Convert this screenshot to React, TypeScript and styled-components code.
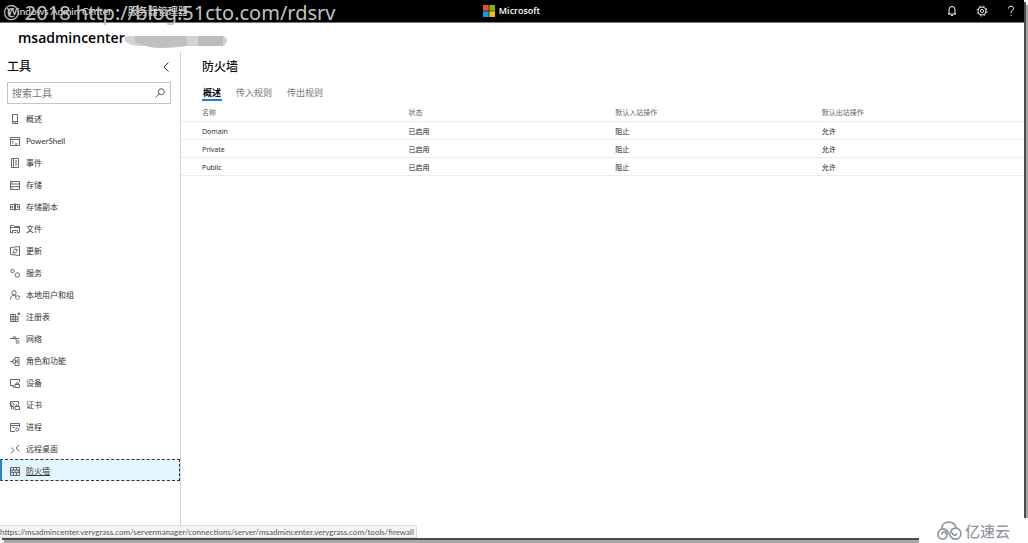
import React from "react";
import styled, { createGlobalStyle } from "styled-components";

const GlobalStyle = createGlobalStyle`
  *, *::before, *::after { box-sizing: border-box; }
  html { background: #fff; }
  body {
    margin: 0;
    color: #222;
    font-family: "Open Sans", "Noto Sans CJK SC", sans-serif;
    font-size: 8px;
  }
  button, input { font: inherit; color: inherit; }
  h1, h2, p, ul { margin: 0; padding: 0; }
`;

const Page = styled.div`
  position: relative;
  min-height: 100vh;
  padding: 0 4px 5px 0;
  display: flex;
  overflow: hidden;
`;

const Window = styled.div`
  position: relative;
  flex: 1;
  min-width: 0;
  display: flex;
  flex-direction: column;
  background: #fff;
  box-shadow: 2px 2px 0 #4c4c4c, 4px 5px 1px #a8a8a8;
`;

const TopBar = styled.header`
  height: 23px;
  padding: 0 8px 1px 7px;
  display: grid;
  grid-template-columns: 1fr auto 1fr;
  align-items: center;
  background: #000;
  color: #fff;
  border-bottom: 1px solid #777;
`;

const ProductLinks = styled.nav`
  display: flex;
  gap: 16px;
  font-family: Lato, "Noto Sans CJK SC", sans-serif;
  font-size: 10px;
  line-height: 14px;
  a { color: #e6e6e6; text-decoration: none; white-space: nowrap; }
`;

const Brand = styled.div`
  display: flex;
  align-items: center;
  gap: 4px;
  font-size: 9px;
  line-height: 14px;
  font-weight: 600;
`;

const TopActions = styled.div`
  display: flex;
  justify-content: flex-end;
  gap: 18px;
`;

const IconButton = styled.button`
  display: flex;
  padding: 0;
  border: 0;
  background: none;
  cursor: pointer;
`;

const Connection = styled.div`
  height: 29px;
  padding: 0 18px;
  display: flex;
  align-items: center;
`;

const ConnectionName = styled.h1`
  font-size: 14px;
  line-height: 20px;
  font-weight: 600;
  color: #000;
`;

const Redaction = styled.svg`
  margin-top: 8px;
`;

const Body = styled.div`
  flex: 1;
  display: flex;
`;

const Sidebar = styled.aside`
  width: 181px;
  flex: none;
  border-right: 1px solid #d4d4d4;
`;

const SidebarHead = styled.div`
  height: 30px;
  padding: 0 10px 0 7px;
  display: flex;
  align-items: center;
  justify-content: space-between;
`;

const SectionTitle = styled.h2`
  font-size: 12px;
  line-height: 18px;
  font-weight: 500;
  color: #111;
`;

const SearchBox = styled.label`
  height: 22px;
  margin: 0 9px 3px 7px;
  padding: 0 5px 0 4px;
  display: flex;
  align-items: center;
  border: 1px solid #c4c4c4;
`;

const SearchInput = styled.input`
  flex: 1;
  min-width: 0;
  padding: 0;
  border: 0;
  outline: 0;
  background: none;
  font-size: 10px;
  line-height: 16px;
  &::placeholder { color: #767676; opacity: 1; }
`;

const ToolList = styled.ul`
  list-style: none;
  font-family: Lato, "Noto Sans CJK SC", sans-serif;
`;

const ToolLink = styled.a<{ $active?: boolean }>`
  height: 22px;
  padding: 2px 0 0 8px;
  display: flex;
  align-items: center;
  gap: 6px;
  color: #333;
  line-height: 12px;
  text-decoration: ${(p) => (p.$active ? "underline" : "none")};
  background: ${(p) => (p.$active ? "#e3f5fd" : "none")};
  border: 1px dashed ${(p) => (p.$active ? "#333" : "transparent")};
  border-left: 2px solid ${(p) => (p.$active ? "#2b7cd3" : "transparent")};
  svg { flex: none; }
`;

const Main = styled.main`
  flex: 1;
  min-width: 0;
`;

const MainHead = styled.div`
  height: 30px;
  padding: 0 21px;
  display: flex;
  align-items: center;
`;

const Tabs = styled.div`
  padding: 0 21px;
  display: flex;
  gap: 13px;
`;

const Tab = styled.button<{ $active?: boolean }>`
  height: 19px;
  padding: 4px 1px 0;
  border: 0;
  border-bottom: 2px solid ${(p) => (p.$active ? "#1b7fd6" : "transparent")};
  background: none;
  font-size: 9px;
  line-height: 13px;
  font-weight: ${(p) => (p.$active ? 700 : 400)};
  color: ${(p) => (p.$active ? "#000" : "#777")};
  cursor: pointer;
`;

const ProfileTable = styled.table`
  width: 100%;
  margin-top: 1px;
  table-layout: fixed;
  border-collapse: separate;
  border-spacing: 0;
  font-size: 7px;
  line-height: 12px;
  text-align: left;
  th, td {
    height: 18px;
    padding: 2px 0 0;
    border-bottom: 1px solid #ededed;
    font-weight: 400;
  }
  th { height: 20px; color: #666; }
  th:first-child, td:first-child { padding-left: 21px; }
`;

const FirstCol = styled.col` width: 27%; `;
const MidCol = styled.col` width: 24.5%; `;

const StatusBubble = styled.div`
  position: absolute;
  left: 0;
  bottom: 0;
  height: 13px;
  padding: 0 2px 0 0;
  border: 1px solid #ddd;
  border-left: 0;
  background: #f4f4f4;
  color: #555;
  font-family: Lato, sans-serif;
  font-size: 8px;
  line-height: 12px;
  white-space: nowrap;
`;

const Watermark = styled.p`
  position: absolute;
  left: 3px;
  top: 0;
  font-family: "Noto Sans", sans-serif;
  font-size: 20px;
  line-height: 26px;
  color: #c2c2c2;
  white-space: nowrap;
  pointer-events: none;
`;

const CornerLogo = styled.div`
  position: absolute;
  right: 0;
  bottom: 0;
  width: 109px;
  height: 25px;
  padding-left: 18px;
  display: flex;
  align-items: center;
  gap: 3px;
  background: #fff;
  color: #9399a3;
  font-size: 15px;
  line-height: 20px;
  font-weight: 500;
`;

const icons: Record<string, React.ReactNode> = {
  overview: <path d="M2.5.5h5v9h-5zM2.5 7.5h5M4.5 8.5h1" />,
  shell: <path d="M.5 1.5h9v8h-9zM.5 3.5h9M2 5l1.5 1.2L2 7.5M4.5 8h3" />,
  events: <path d="M1.5.5h7v9h-7zM3.5.5v9M5 3h2M5 5h2M5 7h2" />,
  storage: <path d="M.5 1.5h9v8h-9zM.5 4h9M.5 6.7h9M1.5 3h1M1.5 8h1" />,
  replica: <path d="M.5 2.5h4v5h-4zM5.5 2.5h4v5h-4zM.5 5h2M7.5 5h2M5 1v8M2.5 3.8v2.4M7.5 3.8v2.4" />,
  files: <path d="M2 8.5H.5v-7h3l1 1h5v6H8M.5 3.5h9M2.5 9.5v-3h5v3M4 8.5h2" />,
  updates: <path d="M.5 1.5 9.500.5v9L.5 8.500zM3.200 4.500a2 2 0 0 1 3.300-.8l.5.600M7 2.800v1.500H5.500M6.900 5.600a2 2 0 0 1-3.300.8l-.5-.5M3 7.400V5.900h1.500" />,
  services: (
    <>
      <circle cx="2.5" cy="3" r="1.7" />
      <circle cx="7.3" cy="7" r="2.2" />
    </>
  ),
  users: (
    <>
      <circle cx="4" cy="2.8" r="2.2" />
      <path d="M.5 9.5C.7 6.500 2.300 5 4 5c.8 0 1.300.2 1.800.7M5.500 6.500 7.500 5.700l2 .8c0 1.500-.6 2.500-2 3.200-1.400-.7-2-1.700-2-3.200z" />
    </>
  ),
  registry: <path d="M.5 2.5h5M.5 2.5v7h7.500v-5M.5 4.800h8M.5 7.200h7.500M3 2.500v7M5.500 2.500v7M8 1h1.500v1.500H8z" />,
  network: (
    <>
      <path d="M0 4.5h9.500M2.500 4.500l2-2.500 1.500 2.500M5 4.500l2 2" />
      <circle cx="7.5" cy="8" r="1.4" />
    </>
  ),
  roles: <path d="M5 3V1.500h4v8H5V8M0 5.500h3M3 3.800h2.500v3.400H3zM7.200 3.500v4M5.500 5.500h2" />,
  devices: <path d="M4 7.5H.5v-6h9V4M2 9h2.500M5 6.500h4.500v3H5zM6 6.500v-1.500h2.500v1.500" />,
  certs: <path d="M3 6.5H.5v-5h8V4M5 6.500h4.500v3H5zM6 6.500V5h2.500v1.500M1.500 9.500v-3M3.500 9.500v-3M2.500 3a1.500 1.500 0 1 0 .1 0" />,
  processes: (
    <>
      <path d="M5 9.5H.5v-8h9V5M.5 3.5h9M2.5 5.5h2" />
      <circle cx="7.3" cy="7.5" r="1.6" />
    </>
  ),
  remote: <path d="M1 3.5 4 6.300 1 9.500M9.200 1 6 4l3.200 3.200" />,
  firewall: <path d="M.5 1.5h9v8h-9zM.5 4h9M.5 6.700h9M3.500 1.500V4M6.500 1.500V4M2 4v2.700M5 4v2.700M8 4v2.700M3.500 6.700v2.800M6.500 6.700v2.800" />,
};

const tools = [
  ["overview", "概述"],
  ["shell", "PowerShell"],
  ["events", "事件"],
  ["storage", "存储"],
  ["replica", "存储副本"],
  ["files", "文件"],
  ["updates", "更新"],
  ["services", "服务"],
  ["users", "本地用户和组"],
  ["registry", "注册表"],
  ["network", "网络"],
  ["roles", "角色和功能"],
  ["devices", "设备"],
  ["certs", "证书"],
  ["processes", "进程"],
  ["remote", "远程桌面"],
  ["firewall", "防火墙"],
];

const ToolIcon = ({ name }: { name: string }) => (
  <svg width="10" height="10" viewBox="0 0 10 10" fill="none" stroke="#5d5365" strokeWidth="0.9" aria-hidden="true">
    {icons[name]}
  </svg>
);

export default function App() {
  return (
    <Page>
      <GlobalStyle />
      <Window>
        <TopBar>
          <ProductLinks>
            <a href="#home">Windows Admin Center</a>
            <a href="#server-manager">服务器管理器</a>
          </ProductLinks>
          <Brand>
            <svg width="12" height="12" viewBox="0 0 12 12" aria-hidden="true">
              <path fill="#f25022" d="M0 0h5.700v5.700H0z" />
              <path fill="#7fba00" d="M6.300 0H12v5.700H6.300z" />
              <path fill="#00a4ef" d="M0 6.300h5.700V12H0z" />
              <path fill="#ffb900" d="M6.300 6.300H12V12H6.300z" />
            </svg>
            Microsoft
          </Brand>
          <TopActions>
            <IconButton aria-label="通知">
              <svg width="12" height="12" viewBox="0 0 12 12" fill="none" stroke="#fff">
                <path d="M2 9h8M3 9V4.500a3 3 0 0 1 6 0V9M5 10.500h2" />
              </svg>
            </IconButton>
            <IconButton aria-label="设置">
              <svg width="12" height="12" viewBox="0 0 12 12" fill="none" stroke="#ddd">
                <circle cx="6" cy="6" r="4" />
                <circle cx="6" cy="6" r="1.6" />
                <circle cx="6" cy="6" r="5" strokeDasharray="2 1.93" />
              </svg>
            </IconButton>
            <IconButton aria-label="帮助">
              <svg width="10" height="12" viewBox="0 0 10 12" fill="none" stroke="#fff">
                <path d="M2.500 3.500C2.500 2 3.500 1.200 5 1.200s2.500.8 2.500 2.200C7.500 5.200 5 5.500 5 8M5 9.500v1.300" />
              </svg>
            </IconButton>
          </TopActions>
        </TopBar>

        <Connection>
          <ConnectionName>msadmincenter</ConnectionName>
          <Redaction width="102" height="13" viewBox="0 0 102 13" aria-hidden="true">
            <path fill="#d2d2d2" d="M0 2 3 1h95q4 1 4 4.500T98 11H12Q4 10 0 6z" />
            <path fill="#c0c0c0" d="M10 1h52v10q-14 2-26 2-12 0-17-3l-9-2z" />
            <path fill="#bcbcbc" d="M73 1h25v10H73z" />
          </Redaction>
        </Connection>

        <Body>
          <Sidebar>
            <SidebarHead>
              <SectionTitle>工具</SectionTitle>
              <IconButton aria-label="折叠">
                <svg width="8" height="10" viewBox="0 0 8 10" fill="none" stroke="#333">
                  <path d="M6.500.5 2 5l4.500 4.500" />
                </svg>
              </IconButton>
            </SidebarHead>
            <SearchBox>
              <SearchInput type="text" placeholder="搜索工具" aria-label="搜索工具" />
              <svg width="10" height="10" viewBox="0 0 10 10" fill="none" stroke="#555" aria-hidden="true">
                <circle cx="6.3" cy="3.7" r="3" />
                <path d="M4.200 5.800.5 9.500" />
              </svg>
            </SearchBox>
            <ToolList>
              {tools.map(([id, label]) => (
                <li key={id}>
                  <ToolLink href={`#${id}`} $active={id === "firewall"}>
                    <ToolIcon name={id} />
                    {label}
                  </ToolLink>
                </li>
              ))}
            </ToolList>
          </Sidebar>

          <Main>
            <MainHead>
              <SectionTitle>防火墙</SectionTitle>
            </MainHead>
            <Tabs role="tablist">
              <Tab role="tab" aria-selected $active>概述</Tab>
              <Tab role="tab">传入规则</Tab>
              <Tab role="tab">传出规则</Tab>
            </Tabs>
            <ProfileTable>
              <colgroup>
                <FirstCol />
                <MidCol />
                <MidCol />
                <col />
              </colgroup>
              <thead>
                <tr>
                  <th>名称</th>
                  <th>状态</th>
                  <th>默认入站操作</th>
                  <th>默认出站操作</th>
                </tr>
              </thead>
              <tbody>
                {["Domain", "Private", "Public"].map((profile) => (
                  <tr key={profile}>
                    <td>{profile}</td>
                    <td>已启用</td>
                    <td>阻止</td>
                    <td>允许</td>
                  </tr>
                ))}
              </tbody>
            </ProfileTable>
          </Main>
        </Body>

        <StatusBubble>
          https://msadmincenter.verygrass.com/servermanager/connections/server/msadmincenter.verygrass.com/tools/firewall
        </StatusBubble>
      </Window>
      <Watermark>© 2018 http://blog.51cto.com/rdsrv</Watermark>
      <CornerLogo>
        <svg width="25" height="20" viewBox="0 0 25 20" fill="none" stroke="#9399a3" strokeWidth="1.8" strokeLinecap="round" aria-hidden="true">
          <path d="M4.800 7.500C5 3.700 8 1.200 11.800 1.200c3.600 0 6.400 2 7.300 5.600" />
          <path d="M5 12.800c.3-1.300 1.300-2 2.500-1.800 1.500.2 2.300 1.400 2.300 2.900 0 2.400-1.800 4.300-4.200 4.300C3 18.200 1 16 1 13.200c0-2.900 2.200-5.200 5-5.200 2.700 0 4.300 1.600 5.700 4.100 1.500 2.900 2.700 6.100 6.500 6.100 3.200 0 5.700-2.400 5.700-5.600S21.500 7.200 18.600 7.200c-3 0-4.700 2-4.700 4.400" />
          <path d="M19.500 13c-.4 1-1.300 1.400-2.200 1.200-1.300-.2-2-1.100-2.200-2.300" />
        </svg>
        亿速云
      </CornerLogo>
    </Page>
  );
}
